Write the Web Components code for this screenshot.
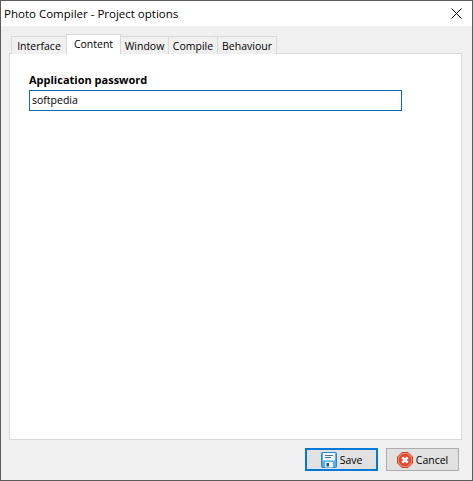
<!DOCTYPE html>
<html>
<head>
<meta charset="utf-8">
<style>
  html, body { margin: 0; padding: 0; background: #f0f0f0; }
  body { width: 473px; height: 481px; overflow: hidden; font: 11px "Open Sans", "Liberation Sans", sans-serif; }
</style>
</head>
<body>
<app-window caption="Photo Compiler - Project options">
  <tab-strip>
    <tab-item style="width:56px">Interface</tab-item>
    <tab-item style="width:55px" selected>Content</tab-item>
    <tab-item style="width:49px">Window</tab-item>
    <tab-item style="width:50px">Compile</tab-item>
    <tab-item style="width:60px">Behaviour</tab-item>
  </tab-strip>
  <tab-page>
    <field-box label="Application password" value="softpedia"></field-box>
  </tab-page>
  <dialog-btn slot="buttons" kind="save" focused>Save</dialog-btn>
  <dialog-btn slot="buttons" kind="cancel">Cancel</dialog-btn>
</app-window>

<script>
(function () {
  class AppWindow extends HTMLElement {
    constructor() {
      super();
      this.attachShadow({ mode: "open" });
      this.shadowRoot.innerHTML = `
        <style>
        :host{
            display:flex;
            flex-direction:column;
            width:473px;
            height:481px;
            box-sizing:border-box;
            border:1px solid #5c5c5c;
            background:#f0f0f0;
            position:relative;
            color:#000;
        }
        .title{
            height:25px;
            flex-shrink:0;
            box-sizing:border-box;
            background:#fff;
            display:flex;
            align-items:center;
            justify-content:space-between;
            padding:0 10px 1px 3px;
            font:11.5px "Open Sans","Noto Sans",sans-serif;
        }
        .body{
            flex:1;
            display:flex;
            flex-direction:column;
            padding:8px 10px 0 8px;
            min-height:0;
        }
        .foot{
            height:40px;
            flex-shrink:0;
            display:flex;
            justify-content:flex-end;
            align-items:flex-start;
            gap:8px;
            padding:8px 13px 0 0;
            box-sizing:border-box;
        }
        .mark{
            position:absolute;
            left:46px;
            top:29px;
            font:bold 28px "Liberation Sans",sans-serif;
            color:rgba(255,255,255,0.7);
            pointer-events:none;
        }
        .mark span{
            font-size:8px;
            font-weight:normal;
            vertical-align:16px;
        }
        </style>
        <div class="title">
          <span id="cap"></span>
          <svg width="11" height="11" viewBox="0 0 11 11"><path d="M0.5 0.5L10.5 10.5M10.5 0.5L0.5 10.5" stroke="#000" stroke-width="1" fill="none"/></svg>
        </div>
        <div class="body"><slot></slot></div>
        <div class="foot"><slot name="buttons"></slot></div>
        <div class="mark">SOFTPEDIA<span>®</span></div>
      `;
    }
    connectedCallback() {
      this.shadowRoot.getElementById("cap").textContent = this.getAttribute("caption");
    }
  }

  class TabStrip extends HTMLElement {
    constructor() {
      super();
      this.attachShadow({ mode: "open" });
      this.shadowRoot.innerHTML = `
        <style>
        :host{
            display:flex;
            align-items:flex-end;
            height:20px;
            padding-left:3px;
            position:relative;
            z-index:1;
            margin-bottom:-1px;
        }
        </style>
        <slot></slot>
      `;
    }
  }

  class TabItem extends HTMLElement {
    constructor() {
      super();
      this.attachShadow({ mode: "open" });
      this.shadowRoot.innerHTML = `
        <style>
        :host{
            display:block;
            box-sizing:border-box;
            height:18px;
            margin-left:-1px;
            background:#f0f0f0;
            border:1px solid #d9d9d9;
            border-bottom:none;
            font:10.5px "Open Sans","Noto Sans",sans-serif;
            line-height:19px;
            text-align:center;
            white-space:nowrap;
        }
        :host([selected]){
            height:20px;
            background:#fff;
            line-height:19px;
            position:relative;
            z-index:1;
        }
        </style>
        <slot></slot>
      `;
    }
  }

  class TabPage extends HTMLElement {
    constructor() {
      super();
      this.attachShadow({ mode: "open" });
      this.shadowRoot.innerHTML = `
        <style>
        :host{
            display:block;
            flex:1;
            background:#fff;
            border:1px solid #d9d9d9;
            padding:18px 19px;
        }
        </style>
        <slot></slot>
      `;
    }
  }

  class FieldBox extends HTMLElement {
    constructor() {
      super();
      this.attachShadow({ mode: "open" });
      this.shadowRoot.innerHTML = `
        <style>
        :host{
            display:block;
            font:10.5px "Open Sans","Noto Sans",sans-serif;
        }
        .label{
            font-size:11px;
            font-weight:bold;
            line-height:16px;
            margin-bottom:2px;
        }
        .input{
            box-sizing:border-box;
            width:373px;
            height:21px;
            border:1px solid #0f6cb2;
            padding:0 2px;
            line-height:19px;
            background:#fff;
        }
        </style>
        <div class="label" id="lbl"></div>
        <div class="input" id="val"></div>
      `;
    }
    connectedCallback() {
      this.shadowRoot.getElementById("lbl").textContent = this.getAttribute("label");
      this.shadowRoot.getElementById("val").textContent = this.getAttribute("value");
    }
  }

  const ICONS = {
    save: `<svg width="16" height="16" viewBox="0 0 16 16">
        <rect x="0.5" y="0.5" width="15" height="15" rx="1" fill="#4fb0ee" stroke="#2a86cc"/>
        <rect x="2" y="1" width="12" height="7.5" fill="#f4f8fb"/>
        <path d="M4 3.5H12M4 5.5H10" stroke="#4d6f8c" stroke-width="1"/>
        <rect x="4" y="10" width="8" height="5.5" fill="#eef2f5"/>
        <rect x="5.5" y="11" width="2.5" height="3.5" fill="#2f5068"/>
      </svg>`,
    cancel: `<svg width="16" height="16" viewBox="0 0 16 16">
        <path d="M5 0.5H11L15.5 5V11L11 15.5H5L0.5 11V5Z" fill="#f08a72" stroke="#d23f27"/>
        <path d="M5.5 2H10.5L14 5.5V10.5L10.5 14H5.5L2 10.5V5.5Z" fill="#e2492f"/>
        <path d="M5.3 5.3L10.7 10.7M10.7 5.3L5.3 10.7" stroke="#fff" stroke-width="2.6"/>
      </svg>`,
  };

  class DialogBtn extends HTMLElement {
    constructor() {
      super();
      this.attachShadow({ mode: "open" });
      this.shadowRoot.innerHTML = `
        <style>
        :host{
            display:flex;
            align-items:center;
            justify-content:center;
            gap:3px;
            box-sizing:border-box;
            width:73px;
            height:23px;
            background:#e1e1e1;
            border:1px solid #adadad;
            font:10.5px "Open Sans","Noto Sans",sans-serif;
        }
        :host([focused]){
            border:2px solid #0078d7;
        }
        svg{ display:block; }
        </style>
        <span id="ico"></span>
        <slot></slot>
      `;
    }
    connectedCallback() {
      this.shadowRoot.getElementById("ico").innerHTML = ICONS[this.getAttribute("kind")] || "";
    }
  }

  customElements.define("app-window", AppWindow);
  customElements.define("tab-strip", TabStrip);
  customElements.define("tab-item", TabItem);
  customElements.define("tab-page", TabPage);
  customElements.define("field-box", FieldBox);
  customElements.define("dialog-btn", DialogBtn);
})();
</script>
</body>
</html>
